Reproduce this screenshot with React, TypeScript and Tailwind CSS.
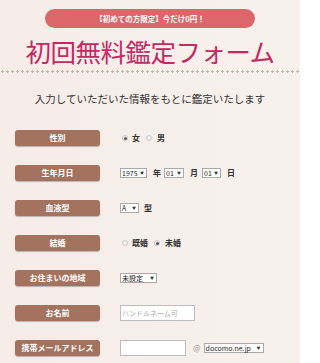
import React from 'react';

const font = { fontFamily: '"Noto Sans CJK JP", "Noto Sans", sans-serif' };

const Label: React.FC<{ text: string }> = ({ text }) => (
  <div className="w-[85px] h-[16px] shrink-0 rounded-[3px] bg-[#a3735f] shadow-[0_1px_1px_rgba(0,0,0,0.25)] flex items-center justify-center text-white text-[8px] font-bold leading-none">
    {text}
  </div>
);

const Radio: React.FC<{ checked?: boolean }> = ({ checked }) => (
  <span className="w-[6px] h-[6px] rounded-full border border-[#c8c8c8] bg-[#f4f4f4] flex items-center justify-center">
    {checked && <span className="w-[3px] h-[3px] rounded-full bg-[#555]" />}
  </span>
);

const Select: React.FC<{ value: string; w: string }> = ({ value, w }) => (
  <span className={`${w} h-[10px] border border-[#a9a9a9] bg-white flex items-center justify-between pl-[1px] pr-[2px] text-[7px] leading-none text-[#222]`}>
    <span>{value}</span>
    <span className="text-[4px] text-[#333]">▼</span>
  </span>
);

const Row: React.FC<{ label: string; children: React.ReactNode }> = ({ label, children }) => (
  <div className="flex items-center h-[16px] pl-[15px]">
    <Label text={label} />
    <div className="ml-[20px] flex items-center text-[8px] text-[#333] leading-none">{children}</div>
  </div>
);

export default function App() {
  return (
    <div className="w-[300px] h-[363px] overflow-hidden bg-[linear-gradient(90deg,#f6ece8,#f7f1ec)]" style={font}>
      <div className="pt-[9px] px-[45px]">
        <div className="h-[19px] rounded-full bg-[#dc676b] flex items-center justify-center text-white text-[7.5px] font-bold">
          【初めての方限定】今だけ0円！
        </div>
      </div>
      <h1 className="mt-[8px] text-center text-[25.5px] leading-[30px] text-[#c22a63] tracking-[-0.5px]">
        初回無料鑑定フォーム
      </h1>
      <div className="mt-[4px] h-[3px] bg-[radial-gradient(circle,#c9b3ab_1px,transparent_1.3px)] bg-[length:5px_3px]" />
      <p className="mt-[20px] text-center text-[10.5px] leading-[12px] text-[#333]">
        入力していただいた情報をもとに鑑定いたします
      </p>

      <div className="mt-[25px] flex flex-col gap-[19px]">
        <Row label="性別">
          <span className="ml-[2px]"><Radio checked /></span>
          <span className="ml-[4px] font-bold">女</span>
          <span className="ml-[6px]"><Radio /></span>
          <span className="ml-[5px] font-bold">男</span>
        </Row>
        <Row label="生年月日">
          <Select value="1975" w="w-[27px]" />
          <span className="ml-[6px] font-bold">年</span>
          <span className="ml-[3px]"><Select value="01" w="w-[20px]" /></span>
          <span className="ml-[6px] font-bold">月</span>
          <span className="ml-[4px]"><Select value="01" w="w-[19px]" /></span>
          <span className="ml-[6px] font-bold">日</span>
        </Row>
        <Row label="血液型">
          <Select value="A" w="w-[19px]" />
          <span className="ml-[5px] font-bold">型</span>
        </Row>
        <Row label="結婚">
          <span className="ml-[2px]"><Radio /></span>
          <span className="ml-[4px] font-bold">既婚</span>
          <span className="ml-[6px]"><Radio checked /></span>
          <span className="ml-[5px] font-bold">未婚</span>
        </Row>
        <Row label="お住まいの地域">
          <Select value="未設定" w="w-[37px]" />
        </Row>
        <Row label="お名前">
          <span className="w-[75px] h-[16px] border border-[#bdbdbd] bg-white flex items-center pl-[1px] text-[7px] text-[#aaa]">
            ハンドルネーム可
          </span>
        </Row>
        <Row label="携帯メールアドレス">
          <span className="w-[66px] h-[16px] border border-[#bdbdbd] bg-white" />
          <span className="ml-[7px] text-[8px] text-[#999]">@</span>
          <span className="ml-[3px]"><Select value="docomo.ne.jp" w="w-[60px]" /></span>
        </Row>
      </div>
    </div>
  );
}
